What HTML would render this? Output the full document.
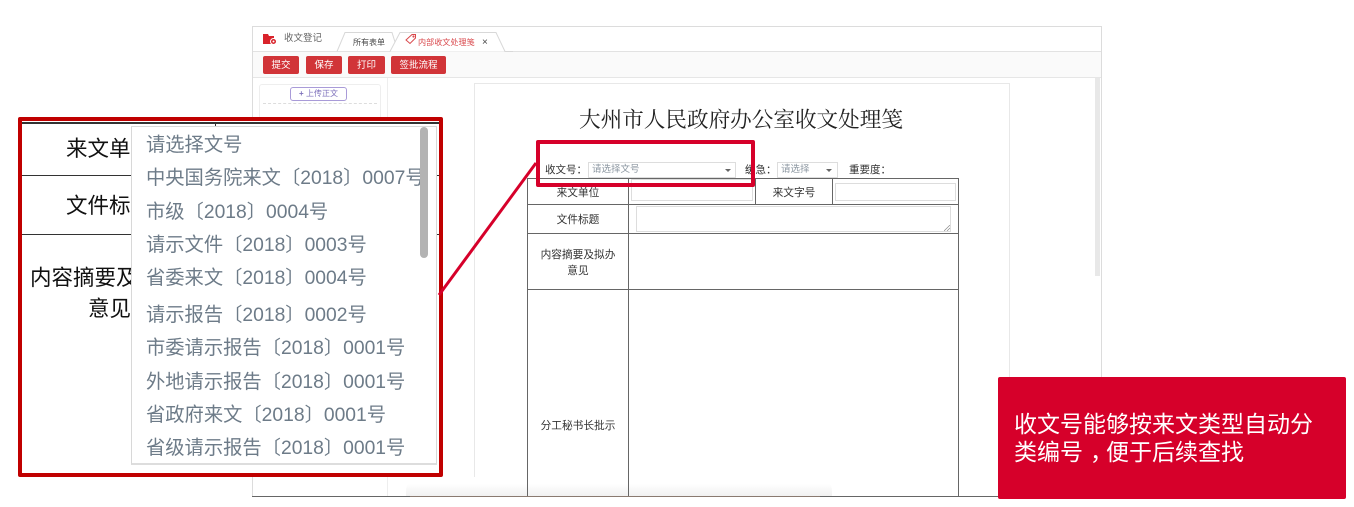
<!DOCTYPE html>
<html lang="zh-CN">
<head>
<meta charset="utf-8">
<title>收文处理笺</title>
<style>
html,body{margin:0;padding:0;background:#fff}
#p{position:relative;width:1354px;height:507px;overflow:hidden;background:#fff;font-family:"Liberation Sans","Noto Sans CJK SC",sans-serif;color:#333}
#p div{position:absolute;box-sizing:border-box}
.t{white-space:nowrap;line-height:1}
.btn{background:#d13438;color:#fff;border-radius:2px;height:18px;top:56px;font-size:9.500px;line-height:19px;text-align:center}
.h{background:#666;height:1px}
.v{background:#666;width:1px}
.lab{font-size:10.700px;color:#333;white-space:nowrap;text-align:center;line-height:16px}
.inp{border:1px solid #ddd;background:#fff}
.o{left:146px;font-size:19.300px;color:#6d7b88;white-space:nowrap;line-height:24px;height:24px}
.big{font-size:21.500px;color:#111;white-space:nowrap;line-height:26px}
</style>
</head>
<body>
<div id="p">
  <!-- window -->
  <div style="left:252px;top:26px;width:850px;height:471px;border:1px solid #dcdcdc;border-bottom:0"></div>
  <div style="left:253px;top:51px;width:848px;height:1px;background:#e2e2e2"></div>
  <div style="left:253px;top:52px;width:848px;height:25px;background:#fafafa"></div>
  <div style="left:253px;top:77px;width:848px;height:1px;background:#e6e6e6"></div>
  <div style="left:387px;top:78px;width:1px;height:418px;background:#eee"></div>
  <div style="left:1095px;top:78px;width:5px;height:198px;background:#e8e8e8"></div>

  <!-- tab bar -->
  <svg style="position:absolute;left:263px;top:33px" width="14" height="13" viewBox="0 0 14 13"><path d="M0 1h5l1 2h5v8H0z" fill="#d9232b"/><circle cx="10.500" cy="8.500" r="3" fill="#d9232b" stroke="#fff"/><circle cx="10.500" cy="8.500" r="1" fill="#fff"/></svg>
  <div class="t" style="left:284px;top:34px;font-size:9.500px;color:#666">收文登记</div>
  <svg style="position:absolute;left:335px;top:30px" width="180" height="23" viewBox="0 0 180 23" fill="none" stroke="#d8d8d8"><path d="M2 21.500 L10 2.500H57L63 21.500"/><path d="M55 21.500 L65 2.500H161L170 21.500H178" fill="#fff"/></svg>
  <div class="t" style="left:353px;top:39px;font-size:8px;color:#444">所有表单</div>
  <svg style="position:absolute;left:405px;top:33px" width="12" height="12" viewBox="0 0 12 12" fill="none" stroke="#d9484c"><path d="M1 7 7 1.500h3.500V5L5 10.500z"/><circle cx="8.500" cy="3.500" r=".6"/></svg>
  <div class="t" style="left:418px;top:39px;font-size:8.100px;color:#d9484c">内部收文处理笺</div>
  <div class="t" style="left:482px;top:38px;font-size:10px;color:#444">×</div>

  <!-- toolbar -->
  <div class="btn" style="left:263px;width:36px">提交</div>
  <div class="btn" style="left:306px;width:36px">保存</div>
  <div class="btn" style="left:348px;width:37px">打印</div>
  <div class="btn" style="left:391px;width:55px">签批流程</div>

  <!-- sidebar -->
  <div style="left:259px;top:84px;width:122px;height:40px;border:1px solid #eee;border-radius:3px"></div>
  <div style="left:263px;top:103px;width:114px;height:0;border-top:1px dashed #ddd"></div>
  <div style="left:290px;top:87px;width:57px;height:14px;border:1px solid #a99bd8;border-radius:3px;font-size:8px;line-height:12px;color:#7d70bb;text-align:center;white-space:nowrap"><b>+</b> 上传正文</div>

  <!-- paper -->
  <div style="left:474px;top:83px;width:536px;height:414px;border:1px solid #e8e8e8;border-bottom:0"></div>
  <div style="left:406px;top:477px;width:426px;height:19px;background:linear-gradient(#fff 35%,#f1f1f1);border-radius:14px 14px 0 0"></div>
  <div class="t" style="left:579px;top:110px;font-size:21.600px;color:#222;font-family:'Liberation Serif','Noto Serif CJK SC',serif">大州市人民政府办公室收文处理笺</div>

  <!-- form head -->
  <div class="t" style="left:545px;top:164px;font-size:10.500px;line-height:12px;color:#333">收文号：</div>
  <div class="inp" style="left:588px;top:162px;width:148px;height:16px;font-size:9.500px;line-height:14px;color:#8b96a0;padding-left:3px">请选择文号</div>
  <div style="left:725px;top:169px;width:0;height:0;border:3px solid transparent;border-top:3px solid #666"></div>
  <div class="t" style="left:745px;top:164px;font-size:10.500px;line-height:12px;color:#333">缓急：</div>
  <div class="inp" style="left:777px;top:162px;width:61px;height:16px;font-size:9.500px;line-height:14px;color:#8b96a0;padding-left:3px">请选择</div>
  <div style="left:826px;top:169px;width:0;height:0;border:3px solid transparent;border-top:3px solid #666"></div>
  <div class="t" style="left:849px;top:164px;font-size:10.500px;line-height:12px;color:#333">重要度：</div>

  <!-- table -->
  <div class="h" style="left:527px;top:178px;width:432px"></div>
  <div class="h" style="left:527px;top:204px;width:432px"></div>
  <div class="h" style="left:527px;top:233px;width:432px"></div>
  <div class="h" style="left:527px;top:289px;width:432px"></div>
  <div class="v" style="left:527px;top:178px;height:318px"></div>
  <div class="v" style="left:628px;top:178px;height:318px"></div>
  <div class="v" style="left:958px;top:178px;height:318px"></div>
  <div class="v" style="left:755px;top:178px;height:26px"></div>
  <div class="v" style="left:832px;top:178px;height:26px"></div>
  <div class="h" style="left:252px;top:496px;width:850px"></div>
  <div style="left:410px;top:496px;width:410px;height:1px;background:#8a7a70"></div>
  <div class="lab" style="left:528px;top:185px;width:100px">来文单位</div>
  <div class="inp" style="left:631px;top:179px;width:122px;height:22px"></div>
  <div class="lab" style="left:756px;top:185px;width:76px">来文字号</div>
  <div class="inp" style="left:835px;top:183px;width:121px;height:18px"></div>
  <div class="lab" style="left:528px;top:212px;width:100px">文件标题</div>
  <div class="inp" style="left:636px;top:206px;width:315px;height:26px"></div>
  <svg style="position:absolute;left:944px;top:225px" width="6" height="6" viewBox="0 0 6 6" stroke="#888" stroke-width=".7"><path d="M0 6 6 0M3 6 6 3"/></svg>
  <div class="lab" style="left:528px;top:247px;width:100px">内容摘要及拟办<br>意见</div>
  <div class="lab" style="left:528px;top:418px;width:100px">分工秘书长批示</div>

  <!-- small highlight -->
  <div style="left:536px;top:140px;width:219px;height:47px;border:4px solid #d6002a;border-radius:2px;z-index:4"></div>

  <!-- zoom panel -->
  <div style="left:18px;top:117px;width:425px;height:360px;border:4px solid #c00000;border-radius:2px;background:#fff;z-index:5"></div>
  <div style="left:22px;top:121px;width:417px;height:352px;z-index:6;overflow:hidden">
    <div style="left:0;top:1px;width:417px;height:2px;background:#333"></div>
    <div style="left:193px;top:1px;width:1px;height:6px;background:#333"></div>
    <div style="left:0;top:54px;width:417px;height:1px;background:#333"></div>
    <div style="left:0;top:113px;width:417px;height:1px;background:#333"></div>
    <div class="big" style="left:44px;top:15px">来文单位</div>
    <div class="big" style="left:44px;top:72px">文件标题</div>
    <div class="big" style="left:8px;top:144px">内容摘要及拟办</div>
    <div class="big" style="left:66px;top:175px">意见</div>
  </div>
  <div style="left:131px;top:126px;width:306px;height:339px;background:#fff;border:1px solid #d8d8d8;border-bottom:2px solid #ddd;z-index:7"></div>
  <div style="z-index:8;left:0;top:0;width:450px;height:480px">
    <div class="o" style="top:134px">请选择文号</div>
    <div class="o" style="top:167px">中央国务院来文〔2018〕0007号</div>
    <div class="o" style="top:201px">市级〔2018〕0004号</div>
    <div class="o" style="top:234px">请示文件〔2018〕0003号</div>
    <div class="o" style="top:267px">省委来文〔2018〕0004号</div>
    <div class="o" style="top:304px">请示报告〔2018〕0002号</div>
    <div class="o" style="top:337px">市委请示报告〔2018〕0001号</div>
    <div class="o" style="top:371px">外地请示报告〔2018〕0001号</div>
    <div class="o" style="top:404px">省政府来文〔2018〕0001号</div>
    <div class="o" style="top:437px">省级请示报告〔2018〕0001号</div>
    <div style="left:420px;top:127px;width:8px;height:131px;background:#b3b3b3;border-radius:4px"></div>
  </div>

  <!-- connector -->
  <svg style="position:absolute;left:430px;top:155px;z-index:9" width="115" height="145" viewBox="0 0 115 145"><path d="M106 8 9 140" stroke="#d6002a" stroke-width="3" fill="none"/></svg>

  <!-- callout -->
  <div style="left:998px;top:377px;width:348px;height:122px;background:#d6002a;border-radius:2px;z-index:10;color:#fff;font-size:23px;line-height:28px;padding:33px 16px 0 16px">收文号能够按来文类型自动分类编号<span style="position:relative;left:7px">，</span>便于后续查找</div>
</div>
</body>
</html>
